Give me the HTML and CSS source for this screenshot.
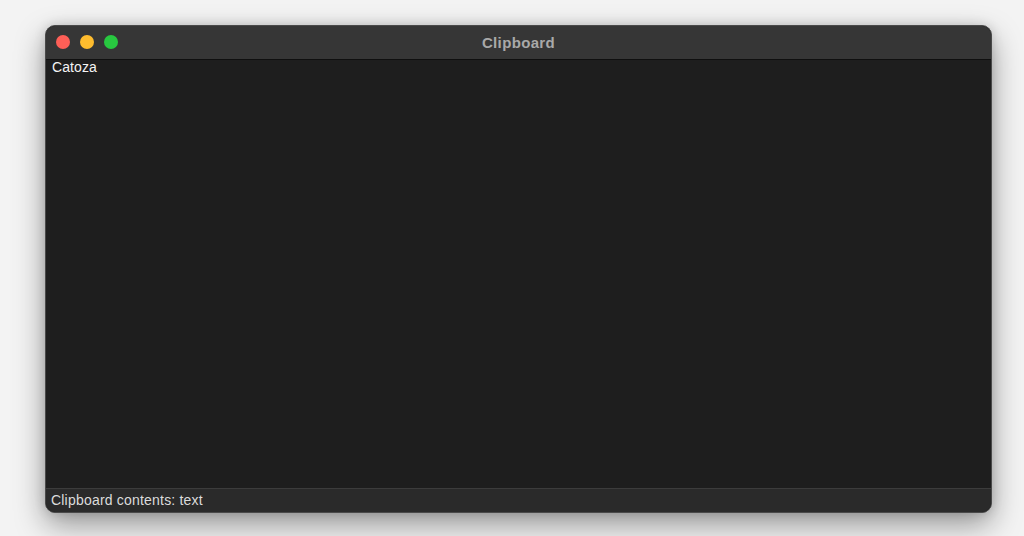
FILE: index.html
```html
<!DOCTYPE html>
<html>
<head>
<meta charset="utf-8">
<link rel="stylesheet" href="styles.css">
</head>
<body>
<div class="frame">
  <div class="window">
    <div class="titlebar">
      <div class="lights">
        <span class="light red"></span>
        <span class="light yellow"></span>
        <span class="light green"></span>
      </div>
      <div class="title">Clipboard</div>
    </div>
    <div class="content">Catoza</div>
    <div class="status">Clipboard contents: text</div>
  </div>
</div>
</body>
</html>
```
FILE: styles.css
```css
html, body {
  margin: 0;
  padding: 0;
  width: 1024px;
  height: 536px;
  overflow: hidden;
  background: #f4f4f4;
  font-family: "Liberation Sans", Arial, sans-serif;
}
.frame {
  box-sizing: border-box;
  width: 1024px;
  height: 536px;
  padding: 25px 32px 23px 45px;
  background: #f3f3f3;
}
.window {
  box-sizing: border-box;
  width: 947px;
  height: 488px;
  border-radius: 10px;
  background: #1e1e1e;
  border: 1px solid #4a4a4a;
  display: flex;
  flex-direction: column;
  overflow: hidden;
  box-shadow: 0 12px 30px rgba(0,0,0,0.38), 0 0 12px rgba(0,0,0,0.14);
}
.titlebar {
  position: relative;
  height: 33px;
  flex: none;
  background: #363636;
  border-bottom: 1px solid #0f0f0f;
  display: flex;
  align-items: center;
  justify-content: center;
}
.lights {
  position: absolute;
  left: 10px;
  top: 9px;
  display: flex;
  gap: 10px;
}
.light {
  width: 14px;
  height: 14px;
  border-radius: 50%;
  display: block;
}
.red { background: #fe5f57; }
.yellow { background: #febc2e; }
.green { background: #28c840; }
.title {
  color: #a9a9a9;
  font-weight: bold;
  font-size: 15px;
  letter-spacing: 0.35px;
}
.content {
  flex: 1;
  color: #f4f4f4;
  font-size: 14px;
  padding: 0 6px;
  line-height: 15px;
  letter-spacing: 0.1px;
}
.status {
  flex: none;
  height: 23px;
  background: #2a2a2a;
  border-top: 1px solid #3c3c3c;
  color: #dcdcdc;
  font-size: 14px;
  letter-spacing: 0.2px;
  line-height: 23px;
  padding-left: 5px;
}
```
